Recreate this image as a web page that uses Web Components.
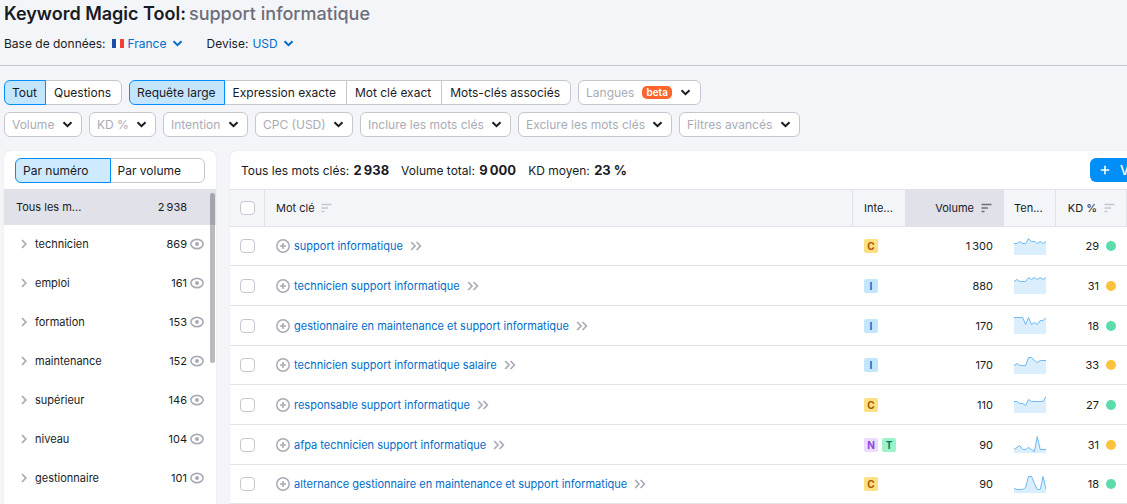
<!DOCTYPE html>
<html lang="fr">
<head>
<meta charset="utf-8">
<title>Keyword Magic Tool</title>
<style>
  html, body { height: 100%; margin: 0; }
  body {
    overflow: hidden;
    background: #f4f5f9;
    color: #191b23;
    font: 12px/16px Inter, "Liberation Sans", sans-serif;
  }
</style>
</head>
<body>
<kw-app></kw-app>
<script>
const define = (name, render) => customElements.define(name, class extends HTMLElement {
  connectedCallback() {
    if (this.shadowRoot) return;
    this.attachShadow({ mode: 'open' }).innerHTML = render(this);
  }
});

/* Icons: width, height, markup */
const ICONS = {
  down: [11, 7, '<path d="M1.5 1.3 5.5 5.2 9.5 1.3" stroke-width="2"/>'],
  right: [6, 10, '<path d="M1 1 4.8 5 1 9" stroke-width="1.8"/>'],
  double: [12, 10, '<path d="M1.2 1 5 5 1.2 9M6.6 1 10.4 5 6.6 9" stroke-width="1.7"/>'],
  eye: [14, 12, '<ellipse cx="7" cy="6" rx="6.1" ry="4.6" stroke-width="1.6"/><circle cx="7" cy="6" r="2" fill="currentColor" stroke="none"/>'],
  add: [14, 14, '<circle cx="7" cy="7" r="6.2" stroke-width="1.5"/><path d="M7 4V10M4 7H10" stroke-width="1.6"/>'],
  plus: [10, 10, '<path d="M5 .8V9.2M.8 5H9.2" stroke-width="1.6"/>'],
  sort: [11, 10, '<path d="M.5 1.5H10.5M.5 5H7M.5 8.5H3.5" stroke-width="1.5"/>'],
  flag: [12, 9, '<g stroke="none"><path fill="#1f4fa3" d="M0 0H4V9H0z"/><path fill="#fff" d="M4 0H8V9H4z"/><path fill="#f0432f" d="M8 0H12V9H8z"/></g>']
};
define('kw-icon', el => {
  const [w, h, body] = ICONS[el.getAttribute('name')];
  return `<style>:host{display:block;flex:none;line-height:0}</style>
  <svg width="${w}" height="${h}" viewBox="0 0 ${w} ${h}" fill="none" stroke="currentColor" aria-hidden="true">${body}</svg>`;
});

/* Group of joined buttons */
define('kw-segments', el => `
<style>
  :host { display: flex; }
  button {
    flex: 1 1 auto; box-sizing: border-box; height: 25px; margin: 0 0 0 -1px; padding: 0 10px 0 8px;
    border: 1px solid #c4c7cf; background: #fff; color: inherit; font: inherit;
    white-space: nowrap; text-align: left;
  }
  button:first-of-type { margin-left: 0; padding: 0 8px 0 7px; border-radius: 6px 0 0 6px; }
  button:last-of-type { border-radius: 0 6px 6px 0; }
  button[aria-pressed=true] { position: relative; border-color: #008ff8; background: var(--pressed, #c4e5fe); }
  :host([equal]) button { flex-basis: 0; padding: 0 7px; }
</style>${el.getAttribute('items').split('|').map((t, i) =>
  `<button type="button" aria-pressed="${i === 0}">${t}</button>`).join('')}`);

/* Drop-down; the "link" attribute gives it the look of a link */
define('kw-select', el => `
<style>
  :host { display: block; color: #a9abb6; }
  label { display: grid; grid-template-columns: 1fr auto; align-items: center; }
  select {
    grid-area: 1 / 1 / 2 / 3; box-sizing: border-box; height: 25px; margin: 0; padding: 0 26px 0 7px;
    border: 1px solid #c4c7cf; border-radius: 6px; background: #fff;
    appearance: none; font: inherit; color: inherit;
  }
  kw-icon { grid-area: 1 / 2; margin-right: 9px; color: #191b23; pointer-events: none; }
  :host([link]) { color: #006dca; }
  :host([link]) select { height: 18px; padding: 0 16px 0 0; border: 0; background: none; }
  :host([link]) kw-icon { margin: 0; color: inherit; }
</style>
<label><select aria-label="${el.getAttribute('value')}"><option>${el.getAttribute('value')}</option></select><kw-icon name="down"></kw-icon></label>`);

define('kw-menu-button', () => `
<style>
  :host { display: block; }
  button {
    display: flex; align-items: center; gap: 8px; box-sizing: border-box; height: 25px; margin: 0; padding: 0 9px 0 7px;
    border: 1px solid #c4c7cf; border-radius: 6px; background: #fff; color: #a9abb6; font: inherit;
  }
  span { padding: 0 4px; border-radius: 5px; background: #ff642d; color: #fff; font: 600 10px/13px Inter, sans-serif; }
  kw-icon { color: #191b23; }
</style>
<button type="button" aria-haspopup="true"><slot></slot><span>beta</span><kw-icon name="down"></kw-icon></button>`);

define('kw-header', () => `
<style>
  :host { display: block; padding: 3px 4px 13px; border-bottom: 1px solid #c4c7cf; }
  h1 { display: flex; gap: 3px; margin: 0; font-size: 18px; line-height: 22px; font-weight: 600; }
  h1 span { color: #6c6e79; font-weight: 500; }
  div { display: flex; align-items: center; margin-top: 10px; height: 17px; }
  kw-icon { margin: 0 4px 0 6px; }
  .currency { margin: 0 4px 0 24px; }
</style>
<h1>Keyword Magic Tool: <span>support informatique</span></h1>
<div><span>Base de données:</span><kw-icon name="flag"></kw-icon><kw-select link value="France"></kw-select>
<span class="currency">Devise:</span><kw-select link value="USD"></kw-select></div>`);

define('kw-filters', () => `
<style>
  :host { display: grid; gap: 7px; padding: 14px 4px; }
  div { display: flex; gap: 7px; }
</style>
<div><kw-segments items="Tout|Questions"></kw-segments>
<kw-segments items="Requête large|Expression exacte|Mot clé exact|Mots-clés associés"></kw-segments>
<kw-menu-button>Langues</kw-menu-button></div>
<div>${['Volume', 'KD %', 'Intention', 'CPC (USD)', 'Inclure les mots clés', 'Exclure les mots clés', 'Filtres avancés']
  .map(t => `<kw-select value="${t}"></kw-select>`).join('')}</div>`);

const GROUPS = [['technicien', 869], ['emploi', 161], ['formation', 153], ['maintenance', 152],
  ['supérieur', 146], ['niveau', 104], ['gestionnaire', 101]];
define('kw-groups', () => `
<style>
  :host { display: block; position: relative; overflow: hidden; border-radius: 6px 6px 0 0; background: #fff; box-shadow: 0 0 1px #c4c7cf; --pressed: #cdeafe; }
  kw-segments { padding: 7px 11px 6px; }
  .all, li { display: flex; align-items: center; font-size: 11px; }
  .all { height: 36px; padding: 0 29px 0 12px; background: #e0e1e9; justify-content: space-between; }
  ul { margin: 0; padding: 0; list-style: none; }
  li { height: 39px; padding: 0 12px 0 17px; color: #a9abb6; }
  li span { color: #191b23; }
  li:first-child { height: 38px; }
  .name { flex: 1; margin-left: 8px; }
  .count { margin-right: 3px; }
  .thumb { position: absolute; top: 42px; right: 1px; width: 5px; height: 170px; border-radius: 3px; background: rgba(25, 27, 35, .3); }
</style>
<kw-segments equal items="Par numéro|Par volume"></kw-segments>
<div class="all"><span>Tous les m...</span><span>2&#8201;938</span></div>
<ul>${GROUPS.map(([n, c]) => `<li><kw-icon name="right"></kw-icon><span class="name">${n}</span><span class="count">${c}</span><kw-icon name="eye"></kw-icon></li>`).join('')}</ul>
<div class="thumb"></div>`);

define('kw-intent', () => `
<style>
  :host { display: block; width: 14px; height: 14px; border-radius: 2px; text-align: center; font: 700 10px/14px Inter, sans-serif; }
  :host([type=C]) { background: #fce081; color: #a75800; }
  :host([type=I]) { background: #c4e5fe; color: #006dca; }
  :host([type=N]) { background: #eddaff; color: #8649e1; }
  :host([type=T]) { background: #9ef2c9; color: #007c65; }
</style><slot></slot>`);

define('kw-trend', el => {
  const line = el.getAttribute('points').split(',').map((y, i) => `${(i * 32 / 11).toFixed(1)} ${+y + 0.5}`).join('L');
  return `<style>:host{display:block;line-height:0}</style>
  <svg width="32" height="17" viewBox="0 0 32 17" aria-hidden="true"><path d="M${line}V17H0z" fill="#dbeefe"/><path d="M${line}" fill="none" stroke="#6bb9f5"/></svg>`;
});

const KEYWORDS = [
  ['support informatique', 'C', '1&#8201;300', '5,5,3,5,5,0,3,3,5,3,5,3', 29],
  ['technicien support informatique', 'I', '880', '4,2,4,4,4,0,2,0,2,0,2,0', 31],
  ['gestionnaire en maintenance et support informatique', 'I', '170', '0,0,0,0,7,0,7,5,7,3,3,0', 18],
  ['technicien support informatique salaire', 'I', '170', '8,6,8,8,8,0,0,3,5,3,3,3', 33],
  ['responsable support informatique', 'C', '110', '5,5,7,7,9,3,5,5,5,5,5,0', 27],
  ['afpa technicien support informatique', 'NT', '90', '13,11,9,13,13,11,13,15,0,13,13,13', 31],
  ['alternance gestionnaire en maintenance et support informatique', 'C', '90', '12,13,13,13,11,0,0,7,13,13,0,13', 18]
];
define('kw-table', () => `
<style>
  :host { display: block; }
  table { width: 100%; table-layout: fixed; border-collapse: separate; border-spacing: 0; font-size: 11px; }
  .check { width: 35px; } .intent { width: 53px; } .volume { width: 98px; } .trend { width: 52px; } .kd { width: 71px; }
  th, td { box-sizing: border-box; padding: 0 11px; border-bottom: 1px solid #e0e1e9; text-align: left; font-weight: 400; white-space: nowrap; }
  th { height: 38px; border-top: 1px solid #e0e1e9; border-right: 1px solid #e0e1e9; background: #f4f5f9; }
  td { height: 40px; }
  tr:nth-child(3n+1) td { height: 39px; }
  th.intent, .tags { padding-right: 0; }
  th.trend, .graph { padding: 0 0 0 10px; }
  th:first-child, td:first-child { padding: 0 0 0 10px; }
  th.sorted { background: #e0e1e9; }
  div { display: flex; align-items: center; gap: 6px; }
  .tags div { gap: 4px; }
  .end { justify-content: flex-end; gap: 7px; }
  th kw-icon { color: #c4c7cf; }
  th.sorted kw-icon { color: #6c6e79; }
  td kw-icon { color: #a9abb6; }
  .key { gap: 4px; }
  .key kw-icon:last-child { margin-left: 3px; }
  a { color: #006dca; text-decoration: none; }
  input { display: block; box-sizing: border-box; width: 15px; height: 14px; margin: 0; border: 1px solid #c4c7cf; border-radius: 4px; background: #fff; appearance: none; }
  i { width: 10px; height: 10px; border-radius: 50%; background: #59ddaa; }
  i.mid { background: #fdc23c; }
</style>
<table>
<thead><tr>
  <th class="check"><input type="checkbox" aria-label="Tous les mots clés"></th>
  <th><div>Mot clé<kw-icon name="sort"></kw-icon></div></th>
  <th class="intent">Inte...</th>
  <th class="volume sorted"><div class="end">Volume<kw-icon name="sort"></kw-icon></div></th>
  <th class="trend">Ten...</th>
  <th class="kd"><div class="end">KD %<kw-icon name="sort"></kw-icon></div></th>
</tr></thead>
<tbody>${KEYWORDS.map(([k, intents, vol, trend, kd]) => `<tr>
  <td><input type="checkbox" aria-label="${k}"></td>
  <td><div class="key"><kw-icon name="add"></kw-icon><a href="#">${k}</a><kw-icon name="double"></kw-icon></div></td>
  <td class="tags"><div>${[...intents].map(c => `<kw-intent type="${c}">${c}</kw-intent>`).join('')}</div></td>
  <td><div class="end">${vol}</div></td>
  <td class="graph"><kw-trend points="${trend}"></kw-trend></td>
  <td><div class="end">${kd}<i class="${kd > 29 ? 'mid' : ''}"></i></div></td>
</tr>`).join('')}</tbody>
</table>`);

define('kw-results', () => `
<style>
  :host { display: block; min-width: 0; border-radius: 6px 0 0 0; background: #fff; box-shadow: 0 0 1px #c4c7cf; }
  header { display: grid; grid-template-columns: 1fr 37px; align-items: center; height: 38px; padding-left: 11px; overflow: hidden; }
  p { display: flex; gap: 12px; margin: 0; white-space: nowrap; }
  b { margin-left: 1px; font-size: 13px; font-weight: 700; }
  button { display: flex; align-items: center; gap: 10px; box-sizing: border-box; width: 100%; height: 24px; margin: 0; padding: 0 0 0 10px; overflow: hidden; border: 0; border-radius: 6px 0 0 6px; background: #008ff8; color: #fff; font: 500 13px/16px Inter, sans-serif; }
</style>
<header><p><span>Tous les mots clés: <b>2&#8201;938</b></span><span>Volume total: <b>9&#8201;000</b></span><span>KD moyen: <b>23 %</b></span></p>
<button type="button"><kw-icon name="plus"></kw-icon>V</button></header>
<kw-table></kw-table>`);

define('kw-app', () => `
<style>
  :host { display: flex; flex-direction: column; min-height: 100vh; }
  main { flex: 1; display: grid; grid-template-columns: 212px minmax(0, 1fr); gap: 14px; padding-left: 4px; }
</style>
<kw-header></kw-header><kw-filters></kw-filters>
<main><kw-groups></kw-groups><kw-results></kw-results></main>`);
</script>
</body>
</html>
